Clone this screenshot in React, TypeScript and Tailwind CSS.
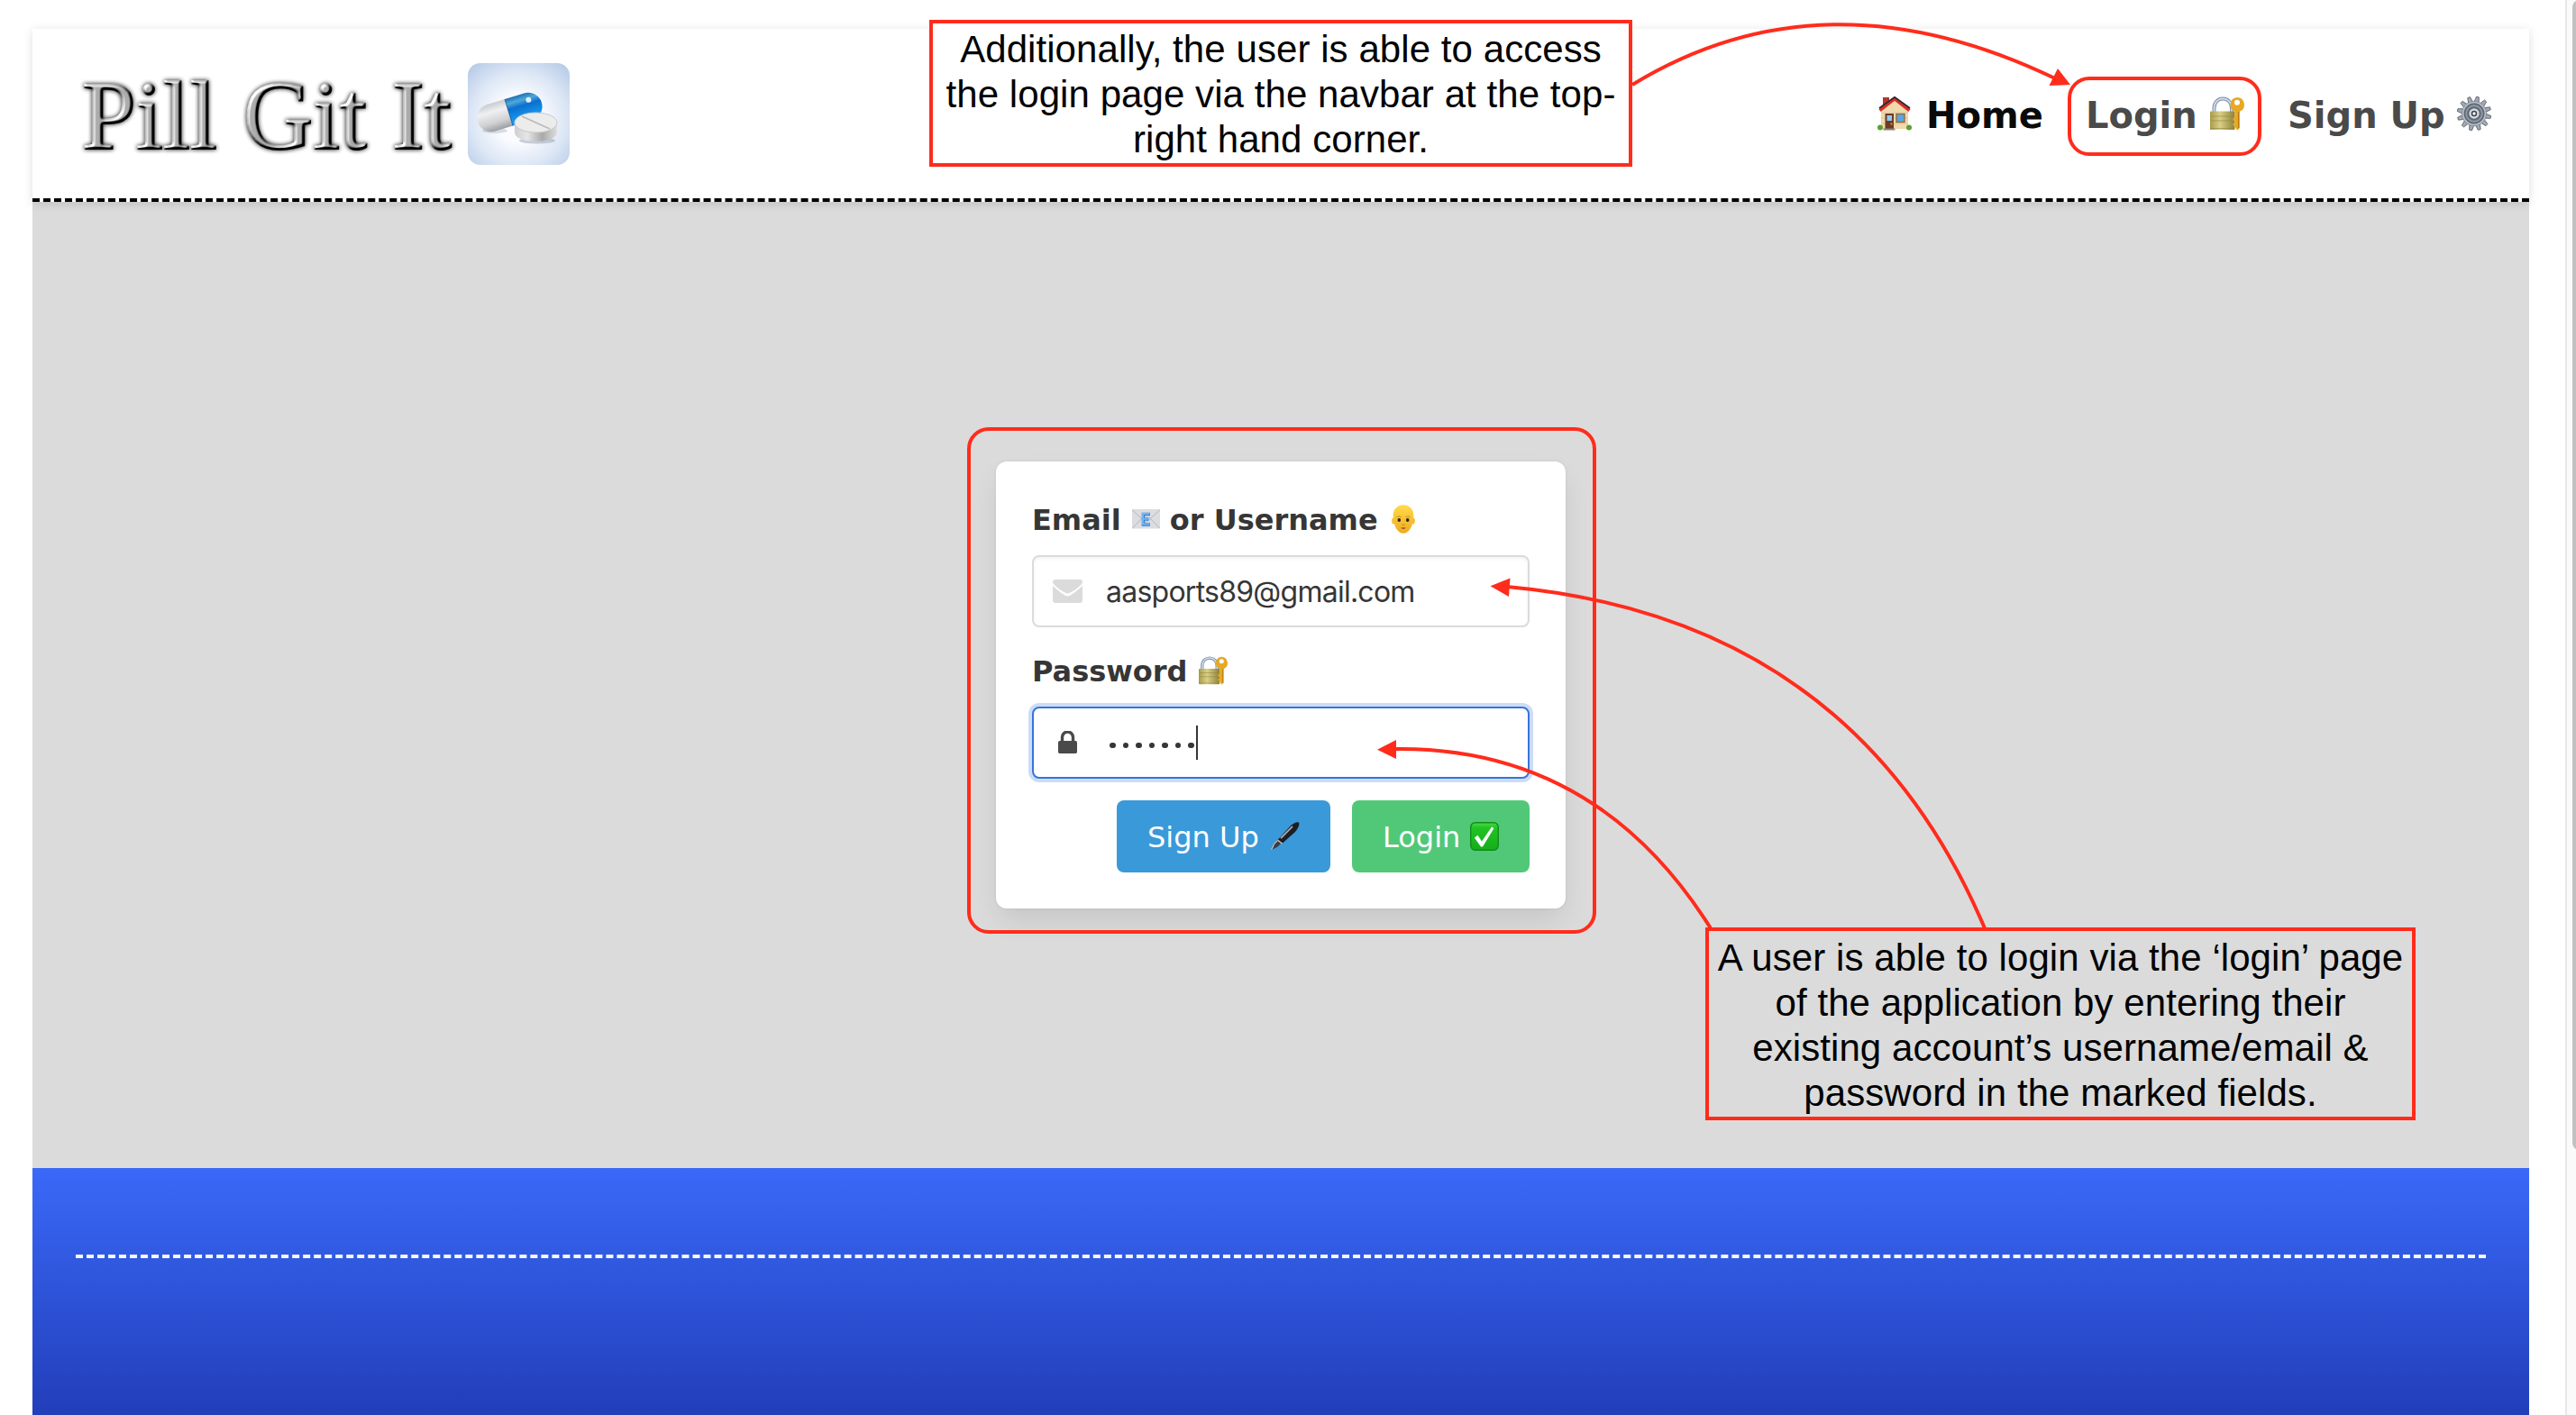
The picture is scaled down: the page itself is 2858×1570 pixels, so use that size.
import React from "react";

const RED = "#ff2c1c";

function House() {
  return (
    <svg width="38" height="38" viewBox="0 0 38 38" className="shrink-0">
      <rect x="6" y="1" width="7" height="11" fill="#b3352b" />
      <path d="M4 14 19 2 34 14V36H4Z" fill="#f1d9ac" />
      <path d="M4 18H34M4 24H34M4 30H34" stroke="#dfc292" strokeWidth=".8" />
      <path d="M2.5 15.5 19 2.5 35.5 15.5" fill="none" stroke="#d62f2b" strokeWidth="3.6" />
      <path d="M2 13 19 .8 36 13" fill="none" stroke="#2e2a2b" strokeWidth="1.8" />
      <rect x="8.5" y="19" width="9.5" height="17" fill="#6d3a26" />
      <rect x="10.5" y="21" width="5.5" height="6" fill="#8ecbf0" />
      <circle cx="15.5" cy="30.5" r="1.1" fill="#e6a02c" />
      <rect x="21" y="19.500" width="9" height="9" fill="#5ba7dc" stroke="#8a6a4c" strokeWidth="1.4" />
      <rect x="6.500" y="35.500" width="13" height="2" fill="#8c8578" />
      <circle cx="3" cy="34.500" r="3" fill="#5b9f34" />
      <circle cx="35" cy="34.500" r="3" fill="#5b9f34" />
    </svg>
  );
}

function LockKey({ size, id }: { size: number; id: string }) {
  return (
    <svg width={size} height={size} viewBox="0 0 38 38" className="shrink-0">
      <defs>
        <linearGradient id={id} x1="0" x2="1">
          <stop offset="0" stopColor="#a89c4c" />
          <stop offset=".4" stopColor="#d9cf86" />
          <stop offset="1" stopColor="#8d8238" />
        </linearGradient>
      </defs>
      <path d="M4.500 18V13C4.500 -1 24 -1 24 13V18" fill="none" stroke="#7f93ad" strokeWidth="4" />
      <path d="M4.500 18V13C4.500 -1 24 -1 24 13V18" fill="none" stroke="#cfdcea" strokeWidth="1.8" />
      <rect x="0" y="16.500" width="27.500" height="20.500" rx="1" fill={`url(#${id})`} />
      <path d="M0 35.500H27M1 22H26M1 27H26" stroke="#8f853d" strokeWidth=".6" />
      <path
        fillRule="evenodd"
        d="M30 1a8.200 8.200 0 0 1 3 15.700V35l-2.500 2.500L28 35v-2l-2.500-1v-2l2-1v-1.500l-2-1v-2.500l2-1V16.700A8.200 8.200 0 0 1 30 1Zm0 2.800a3 3 0 1 0 0 6 3 3 0 0 0 0-6Z"
        fill="#e8a823"
      />
      <path d="M31.500 17V35" stroke="#b97810" strokeWidth="1" />
    </svg>
  );
}

function Gear() {
  const teeth = Array.from({ length: 12 }, (_, i) => i * 30 + 12);
  return (
    <svg width="38" height="40" viewBox="-20 -20 40 40" className="shrink-0">
      {teeth.map((a) => (
        <path key={a} d="M-2.800 -13 -1.500 -19.800H1.500L2.800 -13Z" fill="#a3abb5" stroke="#4f565f" strokeWidth=".8" transform={`rotate(${a})`} />
      ))}
      <circle r="14.500" fill="#b4bcc6" stroke="#6b737d" strokeWidth=".6" />
      <circle r="12" fill="#5c656f" />
      <circle r="10.400" fill="#8d97a3" />
      <circle r="8.200" fill="#5f6873" />
      <circle r="6" fill="#d3d9e0" />
      <circle r="2.600" fill="#fff" stroke="#3c434c" strokeWidth="1.600" />
    </svg>
  );
}

function MailE() {
  return (
    <svg width="31" height="22" viewBox="0 0 31 22" className="shrink-0">
      <rect width="31" height="21.500" rx="1" fill="#dcdde0" />
      <path d="M0 21.500 12 9M31 21.500 19 9M0 .5 15.500 15 31 .5" fill="none" stroke="#b3b6bb" strokeWidth="1" />
      <path d="M20 5.500H12.500V17H20M12.500 11H18.500" fill="none" stroke="#3b83d6" strokeWidth="3.600" />
      <path d="M19.500 5H12V16.500H19.500M12 10.700H18" fill="none" stroke="#6fb4f4" strokeWidth="2" />
    </svg>
  );
}

function Face() {
  return (
    <svg width="26" height="32" viewBox="0 0 26 32" className="shrink-0">
      <defs>
        <linearGradient id="face" x1="0" x2="0" y1="0" y2="1">
          <stop offset="0" stopColor="#ffdb4a" />
          <stop offset="1" stopColor="#efaa22" />
        </linearGradient>
      </defs>
      <ellipse cx="2" cy="18" rx="1.800" ry="3.600" fill="#f5bd34" />
      <ellipse cx="24" cy="18" rx="1.800" ry="3.600" fill="#f5bd34" />
      <path d="M13 .3C20.500 .3 24.700 6 24.300 13C24 23 19.500 31.800 13 31.800S2 23 1.700 13C1.300 6 5.500 .3 13 .3Z" fill="url(#face)" />
      <path d="M5.500 13.800Q8 11.800 10.500 13.800M15.500 13.800Q18 11.800 20.500 13.800" fill="none" stroke="#c98d1e" strokeWidth="1" />
      <ellipse cx="8.300" cy="17" rx="1.800" ry="2.100" fill="#36210f" />
      <ellipse cx="17.700" cy="17" rx="1.800" ry="2.100" fill="#36210f" />
      <path d="M11.500 22Q13 23 14.500 22" fill="none" stroke="#c58416" strokeWidth="1" />
      <path d="M10 25.800Q13 24.500 16 25.800Q13 28 10 25.800Z" fill="#8e4a1c" />
    </svg>
  );
}

function Pen() {
  return (
    <svg width="32" height="32" viewBox="0 0 32 32" className="shrink-0">
      <path d="M0 31.500 3.500 23.500 8 19 12.500 22.500 7.500 27.500Z" fill="#3b3d42" />
      <path d="M.5 31 4 23.800 7 21" fill="none" stroke="#c3c7ce" strokeWidth="1.200" />
      <path d="M8 19.500 22 4Q28 -1 31 .5Q32.500 4 27 11L13 23.500Z" fill="#1d1e22" />
      <path d="M11 18 24 4.800" stroke="#a4a9b3" strokeWidth="1.800" />
      <path d="M7.300 20 12.500 24" stroke="#c9ccd2" strokeWidth="1.300" />
    </svg>
  );
}

function Check() {
  return (
    <svg width="32" height="32" viewBox="0 0 32 32" className="shrink-0">
      <defs>
        <linearGradient id="chk" x1="0" x2="0" y1="0" y2="1">
          <stop offset="0" stopColor="#4ed84a" />
          <stop offset=".2" stopColor="#1fc322" />
          <stop offset="1" stopColor="#17ad1b" />
        </linearGradient>
      </defs>
      <rect x=".7" y=".7" width="30.600" height="30.600" rx="5" fill="url(#chk)" stroke="#128c19" strokeWidth="1.400" />
      <path d="M4.800 17.500 8.500 14.800 13 21.500 24 5.500 26.500 7 14 27.500H12Z" fill="#fff" />
    </svg>
  );
}

function LogoText() {
  return (
    <svg width="440" height="146" viewBox="78 53.500 440 146" className="shrink-0 overflow-visible">
      <defs>
        <filter id="metal" x="-5%" y="-20%" width="110%" height="140%" colorInterpolationFilters="sRGB">
          <feGaussianBlur in="SourceAlpha" stdDeviation="1.700" result="b" />
          <feDiffuseLighting in="b" surfaceScale="7" diffuseConstant="1.050" lightingColor="#ffffff" result="lit">
            <feDistantLight azimuth="225" elevation="40" />
          </feDiffuseLighting>
          <feComposite in="lit" in2="SourceAlpha" operator="in" result="body" />
          <feGaussianBlur in="SourceAlpha" stdDeviation="2.600" result="sb" />
          <feComponentTransfer in="sb" result="shadow">
            <feFuncA type="linear" slope=".95" />
          </feComponentTransfer>
          <feMerge>
            <feMergeNode in="shadow" />
            <feMergeNode in="body" />
          </feMerge>
        </filter>
      </defs>
      <g filter="url(#metal)" fontFamily="Liberation Serif, serif" fontSize="109" stroke="#000" strokeWidth="2">
        <text x="91" y="164" textLength="150" lengthAdjust="spacingAndGlyphs">Pill</text>
        <text x="270" y="164" textLength="137" lengthAdjust="spacingAndGlyphs">Git</text>
        <text x="435" y="164" textLength="66" lengthAdjust="spacingAndGlyphs">It</text>
      </g>
    </svg>
  );
}

function PillPicture() {
  return (
    <svg width="113" height="113" viewBox="0 0 113 113" className="shrink-0">
      <defs>
        <radialGradient id="pbg" cx=".5" cy=".55" r=".72">
          <stop offset=".3" stopColor="#fbfcff" />
          <stop offset=".65" stopColor="#dce6f5" />
          <stop offset="1" stopColor="#b3c9e6" />
        </radialGradient>
        <linearGradient id="pwhite" x1="0" x2="0" y1="0" y2="1">
          <stop offset="0" stopColor="#c9cbce" />
          <stop offset=".3" stopColor="#f0f0f1" />
          <stop offset=".7" stopColor="#d0d1d3" />
          <stop offset="1" stopColor="#9b9ea2" />
        </linearGradient>
        <linearGradient id="pblue" x1="0" x2="0" y1="0" y2="1">
          <stop offset="0" stopColor="#1d6fb4" />
          <stop offset=".2" stopColor="#4fa9d8" />
          <stop offset=".4" stopColor="#0c6fd0" />
          <stop offset="1" stopColor="#18a8fa" />
        </linearGradient>
        <linearGradient id="ptab" x1="0" x2="1">
          <stop offset="0" stopColor="#cfcfcf" />
          <stop offset=".3" stopColor="#e6e6e6" />
          <stop offset=".65" stopColor="#a9a9a9" />
          <stop offset="1" stopColor="#dedede" />
        </linearGradient>
      </defs>
      <rect width="113" height="113" rx="14" fill="url(#pbg)" />
      <ellipse cx="30" cy="75" rx="14" ry="3" fill="#9fb0c6" opacity=".4" />
      <ellipse cx="77" cy="86" rx="20" ry="3.500" fill="#8b97a8" opacity=".45" />
      <g transform="translate(46.500 54.500) rotate(-17)">
        <path d="M-1 -15.500H-21.500A15.500 15.500 0 0 0 -21.500 15.500H-1Z" fill="url(#pwhite)" />
        <path d="M-1 -15.500H21.500A15.500 15.500 0 0 1 21.500 15.500H-1Z" fill="url(#pblue)" />
        <path d="M-1 -15.500V15.500" stroke="#0d5c9f" strokeWidth=".8" />
        <circle cx="24" cy="-7" r="3" fill="#fff" opacity=".85" />
      </g>
      <path d="M52 66V77C52 90 99 90 99 77V66Z" fill="url(#ptab)" />
      <ellipse cx="75.500" cy="66" rx="23.500" ry="11" fill="#ececec" stroke="#c9c9c9" strokeWidth="1" />
      <path d="M60 59 91 73" stroke="#b9b9b9" strokeWidth="1.400" />
    </svg>
  );
}

function Navbar() {
  return (
    <header className="relative z-10 flex h-48 items-center justify-between border-b-4 border-dashed border-black bg-white pl-[42px] pr-[42px] shadow-[0_2px_10px_rgba(10,10,10,0.13)]">
      <div className="flex items-center gap-px pt-px">
        <LogoText />
        <PillPicture />
      </div>
      <nav className="flex items-center font-['DejaVu_Sans',sans-serif] text-[40px] font-bold leading-[60px] whitespace-nowrap text-[#4a4a4a]">
        <a className="flex items-center text-[#0a0a0a]">
          <House />
          <span className="ml-4 w-[129px] pt-1">Home</span>
        </a>
        <a className="relative ml-12 flex items-center">
          <span className="w-[138px] pt-1">Login</span>
          <LockKey size={38} id="nav-lock" />
          <span className="absolute -left-5 -right-[19px] -top-[9px] h-[88px] rounded-[24px] border-4 border-[#ff2c1c]" />
        </a>
        <a className="ml-12 flex items-center">
          <span className="w-[188px] pt-1">Sign Up</span>
          <Gear />
        </a>
      </nav>
    </header>
  );
}

function LoginCard() {
  return (
    <form className="flex w-[632px] flex-col rounded-xl bg-white p-10 font-['DejaVu_Sans',sans-serif] text-[32px] leading-[48px] whitespace-nowrap text-[#363636] shadow-[0_16px_32px_-4px_rgba(10,10,10,0.1),0_0_0_2px_rgba(10,10,10,0.02)]">
      <label className="flex h-12 items-center font-bold">
        <span className="pt-0.5">Email</span>
        <span className="ml-3"><MailE /></span>
        <span className="ml-[11px] pt-0.5">or Username</span>
        <span className="ml-[15px]"><Face /></span>
      </label>
      <div className="mt-4 flex h-20 items-center rounded-lg border-2 border-[#dbdbdb] bg-white pl-[21px] shadow-[inset_0_2px_4px_rgba(10,10,10,0.05)]">
        <svg width="33" height="26" viewBox="0 0 33 26">
          <path d="M3 0H30A3 3 0 0 1 33 3C33 6 20 15.500 16.500 15.500S0 6 0 3A3 3 0 0 1 3 0Z" fill="#dbdbdb" />
          <path d="M0 7C5 11.500 13 18.500 16.500 18.500S28 11.500 33 7V23A3 3 0 0 1 30 26H3A3 3 0 0 1 0 23Z" fill="#dbdbdb" />
        </svg>
        <span className="ml-[26px] pt-0.5 font-['Inter',sans-serif] tracking-[-0.75px]">aasports89@gmail.com</span>
      </div>
      <label className="mt-6 flex h-12 items-center font-bold">
        <span className="pt-0.5">Password</span>
        <span className="ml-3"><LockKey size={32} id="label-lock" /></span>
      </label>
      <div className="mt-4 flex h-20 items-center rounded-lg border-2 border-[#3575da] bg-white pl-[27px] shadow-[0_0_0_4px_#cddcf6]">
        <svg width="21" height="25" viewBox="0 0 21 25" className="-mt-0.5">
          <path d="M4.500 12V7A6 6 0 0 1 16.500 7V12" fill="none" stroke="#4a4a4a" strokeWidth="3.400" />
          <rect y="11" width="21" height="14" rx="1.800" fill="#4a4a4a" />
        </svg>
        <div className="ml-[36px] mt-1.5 flex gap-2">
          {[0, 1, 2, 3, 4, 5, 6].map((n) => (
            <i key={n} className="size-[6.500px] rounded-full bg-[#363636]" />
          ))}
        </div>
        <i className="ml-0.5 h-[38px] w-0.5 bg-[#363636]" />
      </div>
      <div className="mt-6 flex justify-end gap-6 text-white">
        <button type="button" className="flex h-20 w-[237px] items-center justify-between rounded-lg bg-[#3a99d9] px-[34px]">
          <span className="pt-0.5">Sign Up</span> <Pen />
        </button>
        <button type="button" className="flex h-20 w-[197px] items-center justify-between rounded-lg bg-[#50c878] px-[34px]">
          <span className="pt-0.5">Login</span> <Check />
        </button>
      </div>
    </form>
  );
}

function Annotations() {
  return (
    <div className="pointer-events-none absolute inset-0 z-20 text-center font-['Liberation_Sans',Arial,sans-serif] text-[42px] leading-[50px] tracking-[0.07px] whitespace-nowrap text-black">
      <div className="absolute left-[1031px] top-[22px] h-[163px] w-[780px] border-4 border-[#ff2c1c] bg-white pt-1">
        <p>Additionally, the user is able to access</p>
        <p>the login page via the navbar at the top-</p>
        <p>right hand corner.</p>
      </div>
      <div className="absolute left-[1073px] top-[474px] h-[562px] w-[698px] rounded-[24px] border-4 border-[#ff2c1c]" />
      <div className="absolute left-[1892px] top-[1029px] h-[214px] w-[788px] border-4 border-[#ff2c1c] pt-[5px]">
        <p>A user is able to login via the ‘login’ page</p>
        <p>of the application by entering their</p>
        <p>existing account’s username/email &amp;</p>
        <p>password in the marked fields.</p>
      </div>
      <svg className="absolute inset-0" width="2858" height="1570" viewBox="0 0 2858 1570" fill="none" stroke={RED} strokeWidth="4">
        <path d="M1811 94Q2024 -36 2280 87" />
        <path d="M1672 651Q2056 686 2202 1030" />
        <path d="M1547 831Q1771 828 1898 1030" />
        <g fill={RED} stroke="none">
          <path d="M2297 94 2283 76 2273.500 95Z" />
          <path d="M1653.500 650.300 1675.500 641.500 1674 662Z" />
          <path d="M1528 831.700 1549 821 1549 842Z" />
        </g>
      </svg>
    </div>
  );
}

export default function App() {
  return (
    <div className="relative flex h-[1570px] w-[2858px] overflow-hidden bg-white">
      <div className="ml-9 mt-8 flex w-[2770px] flex-col">
        <Navbar />
        <main className="flex h-[1072px] shrink-0 items-center justify-center bg-[#dbdbdb]">
          <LoginCard />
        </main>
        <footer className="flex-1 bg-linear-to-b from-[#3a69f8] to-[#223eba] px-12 pt-24">
          <div className="border-t-4 border-dashed border-[#f8f8fa]" />
        </footer>
      </div>
      <div className="ml-10 flex w-3 justify-end border-l-2 border-[#e8e8e8] bg-[#fafafa]">
        <div className="h-[1276px] w-1 overflow-hidden">
          <div className="h-full w-4 rounded-lg bg-[#c1c1c1]" />
        </div>
      </div>
      <Annotations />
    </div>
  );
}
